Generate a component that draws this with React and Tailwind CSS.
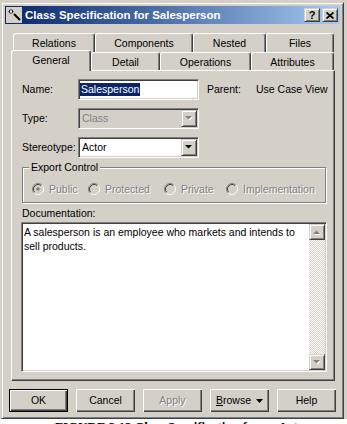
const raised =
  'border border-[#d4d0c8] border-r-[#404040] border-b-[#404040] shadow-[inset_1px_1px_#fff,inset_-1px_-1px_#808080]';
const sunken =
  'border border-[#808080] border-r-white border-b-white shadow-[inset_1px_1px_#404040,inset_-1px_-1px_#d4d0c8]';
const tabEdge =
  'border-t border-l border-r border-white border-r-[#404040] shadow-[inset_-1px_0_#808080] rounded-t-[3px] bg-[#d4d0c8]';
const dim = 'text-[#808080] [text-shadow:1px_1px_0_#fff]';

const backTabs = [
  ['Relations', 'w-[82px]'],
  ['Components', 'w-[98px]'],
  ['Nested', 'w-[73px]'],
  ['Files', 'w-[68px]'],
];
const frontTabs = [
  ['Detail', 'w-[69px]'],
  ['Operations', 'w-[91px]'],
  ['Attributes', 'w-[83px]'],
];

export default function App() {
  return (
    <div className="w-[347px] h-[424px] bg-[#d4d0c8] overflow-hidden flex flex-col font-['Liberation_Sans',Arial,sans-serif] text-[10.5px] leading-[13px] text-black select-none">
      <Window />
      <div className="flex-1 bg-white overflow-hidden pl-[55px]">
        <div className="font-['Liberation_Serif',serif] font-bold text-[13px] leading-[15px] whitespace-nowrap">
          FIGURE 3.12 Class Specification for an Actor
        </div>
      </div>
    </div>
  );
}

function Window() {
  return (
    <div className="ml-[1px] mt-[2px] w-[343px] h-[417px] shrink-0 border border-[#d4d0c8] border-r-[#404040] border-b-[#404040] shadow-[inset_1px_1px_#fff,inset_-1px_-1px_#808080] p-[3px] flex flex-col">
      <TitleBar />

      <div className="mt-[9px] ml-[6px] w-[324px] flex flex-col">
        <div className="flex h-[19px] pl-[2px]">
          {backTabs.map(([label, w]) => (
            <div key={label} className={`${w} h-full ${tabEdge} flex items-start justify-center pt-[3px]`}>
              {label}
            </div>
          ))}
        </div>
        <div className="flex h-[18px] items-end">
          <div className={`relative z-10 w-[80px] h-[21px] -mb-[1px] ${tabEdge} flex justify-center pt-[3px]`}>
            General
          </div>
          {frontTabs.map(([label, w]) => (
            <div key={label} className={`${w} h-full ${tabEdge} flex items-start justify-center pt-[3px]`}>
              {label}
            </div>
          ))}
        </div>
        <Panel />
      </div>

      <div className="mt-[8px] ml-[4px] flex gap-[8px]">
        <PushButton def>OK</PushButton>
        <PushButton>Cancel</PushButton>
        <PushButton disabled>Apply</PushButton>
        <PushButton left>
          <span>
            <span className="underline">B</span>rowse
          </span>
          <svg width="7" height="4" viewBox="0 0 7 4" className="ml-[5px]">
            <path d="M0 0h7L3.5 4z" fill="#000" />
          </svg>
        </PushButton>
        <PushButton>Help</PushButton>
      </div>
    </div>
  );
}

function TitleBar() {
  return (
    <div className="h-[18px] shrink-0 bg-linear-to-r from-[#0a246a] to-[#a6caf0] flex items-center pl-[1px] pr-[2px]">
      <AppIcon />
      <span className="ml-[3px] text-white font-bold text-[11.5px] leading-[14px] whitespace-nowrap">
        Class Specification for Salesperson
      </span>
      <div className="ml-auto flex gap-[2px]">
        <div className={`w-[16px] h-[14px] ${raised} bg-[#d4d0c8] flex items-center justify-center font-bold text-[11px] leading-[11px] pt-[1px]`}>
          ?
        </div>
        <div className={`w-[16px] h-[14px] ${raised} bg-[#d4d0c8] flex items-center justify-center`}>
          <svg width="8" height="7" viewBox="0 0 8 7">
            <path d="M0.5 0.5L7.5 6.5M7.5 0.5L0.5 6.5" stroke="#000" strokeWidth="1.7" />
          </svg>
        </div>
      </div>
    </div>
  );
}

function AppIcon() {
  return (
    <svg width="16" height="16" viewBox="0 0 16 16">
      <rect width="16" height="16" fill="#d4d0c8" />
      <path d="M8 7L14 13" stroke="#000" strokeWidth="2" />
      <path d="M5 2v5M2.5 4.5h5M3 3l4 3M7 3L3 6" stroke="#000" strokeWidth="0.9" />
      <rect x="4" y="3.5" width="2" height="2" fill="#fff" />
    </svg>
  );
}

function Panel() {
  return (
    <div className="h-[311px] border border-white border-r-[#404040] border-b-[#404040] shadow-[inset_-1px_-1px_#808080] pt-[8px] pl-[9px] flex flex-col">
      <div className="flex items-center h-[21px]">
        <span className="w-[57px] pl-[1px]">Name:</span>
        <div className={`w-[121px] h-[21px] bg-white ${sunken} flex items-center pl-[1px]`}>
          <span className="bg-[#0a246a] text-white leading-[13px] px-[1px]">Salesperson</span>
        </div>
        <span className="ml-[8px] w-[49px]">Parent:</span>
        <span>Use Case View</span>
      </div>

      <div className="mt-[8px] flex items-center h-[21px]">
        <span className="w-[57px] pl-[1px]">Type:</span>
        <Combo value="Class" disabled />
      </div>

      <div className="mt-[8px] flex items-center h-[21px]">
        <span className="w-[57px] pl-[1px]">Stereotype:</span>
        <Combo value="Actor" />
      </div>

      <div className="mt-[9px] ml-[1px] w-[304px] h-[36px] border border-[#808080] shadow-[inset_1px_1px_#fff,1px_1px_#fff] flex flex-col">
        <span className="-mt-[8px] ml-[6px] px-[2px] w-fit bg-[#d4d0c8] leading-[14px]">Export Control</span>
        <div className="mt-[8px] pl-[9px] h-[14px] flex items-center">
          <Radio label="Public" w="w-[56px]" checked />
          <Radio label="Protected" w="w-[76px]" />
          <Radio label="Private" w="w-[62px]" />
          <Radio label="Implementation" w="w-[84px]" />
        </div>
      </div>

      <span className="mt-[3px] ml-[1px] leading-[14px]">Documentation:</span>

      <div className={`mt-[2px] w-[306px] h-[150px] bg-white ${sunken} p-[1px] flex`}>
        <div className="flex-1 pl-[1px] pt-[1px] leading-[14px]">
          A salesperson is an employee who markets and intends to
          <br />
          sell products.
        </div>
        <div className="w-[16px] flex flex-col">
          <div className={`h-[16px] ${raised} bg-[#d4d0c8] flex items-center justify-center`}>
            <Arrow up dim />
          </div>
          <div className="flex-1 bg-[repeating-conic-gradient(#fff_0%_25%,#d4d0c8_0%_50%)] bg-[length:2px_2px]" />
          <div className={`h-[16px] ${raised} bg-[#d4d0c8] flex items-center justify-center`}>
            <Arrow dim />
          </div>
        </div>
      </div>
    </div>
  );
}

function Combo({ value, disabled }) {
  return (
    <div className={`w-[121px] h-[21px] ${sunken} ${disabled ? 'bg-[#d4d0c8] text-[#808080]' : 'bg-white'} p-[1px] flex`}>
      <span className="flex-1 pl-[2px] flex items-center">{value}</span>
      <div className={`w-[16px] h-full ${raised} bg-[#d4d0c8] flex items-center justify-center`}>
        <Arrow dim={disabled} />
      </div>
    </div>
  );
}

function Arrow({ up, dim: faded }) {
  const d = up ? 'M0 4h7L3.5 0.5z' : 'M0 0h7L3.5 3.5z';
  return (
    <svg width="8" height="5" viewBox="0 0 8 5">
      {faded && <path d={d} fill="#fff" transform="translate(1 1)" />}
      <path d={d} fill={faded ? '#808080' : '#000'} />
    </svg>
  );
}

function Radio({ label, w, checked }) {
  return (
    <div className={`${w} shrink-0 flex items-center`}>
      <svg width="12" height="12" viewBox="0 0 12 12" className="shrink-0">
        <circle cx="6" cy="6" r="4.2" fill="#d4d0c8" />
        <path d="M2.11 9.89A5.5 5.5 0 0 1 9.89 2.11" fill="none" stroke="#808080" />
        <path d="M9.89 2.11A5.5 5.5 0 0 1 2.11 9.89" fill="none" stroke="#fff" />
        <path d="M2.82 9.18A4.5 4.5 0 0 1 9.18 2.82" fill="none" stroke="#404040" />
        <path d="M9.18 2.82A4.5 4.5 0 0 1 2.82 9.18" fill="none" stroke="#d4d0c8" />
        {checked && <circle cx="6" cy="6" r="1.8" fill="#808080" />}
      </svg>
      <span className={`ml-[5px] whitespace-nowrap ${dim}`}>{label}</span>
    </div>
  );
}

function PushButton({ children, def, disabled, left }) {
  return (
    <div
      className={`w-[59px] h-[23px] flex items-center ${left ? 'justify-start pl-[6px]' : 'justify-center'} ${
        def ? 'border border-black' : ''
      } shadow-[inset_1px_1px_#fff,inset_-1px_-1px_#404040,inset_-2px_-2px_#808080] ${disabled ? dim : ''}`}
    >
      {children}
    </div>
  );
}
